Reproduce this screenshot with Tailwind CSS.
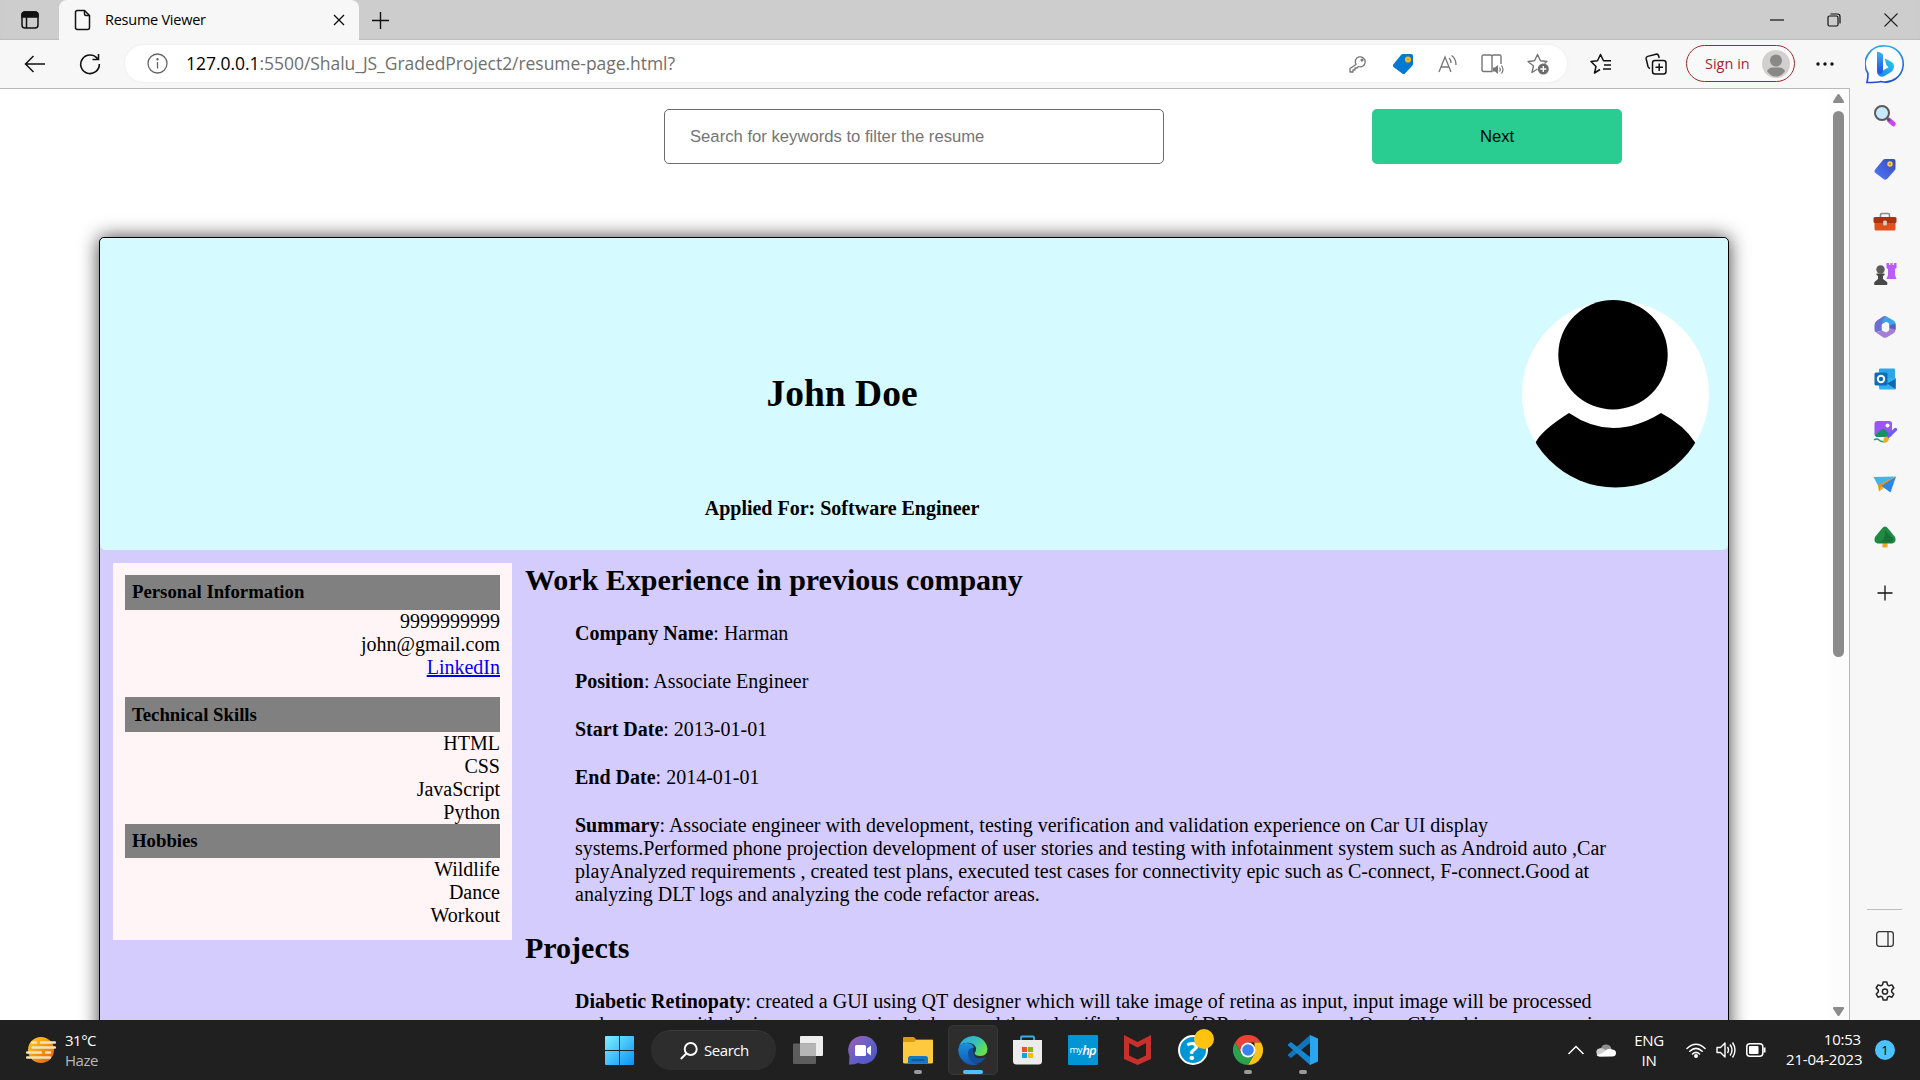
<!DOCTYPE html>
<html lang="en">
<head>
<meta charset="utf-8">
<title>Resume Viewer</title>
<script src="https://cdn.jsdelivr.net/npm/@tailwindcss/browser@4"></script>
</head>
<body class="w-[1920px] h-[1080px] overflow-hidden flex flex-col bg-white text-black font-['Open_Sans',sans-serif]">

<!-- Tab strip -->
<header class="h-10 shrink-0 bg-[#cdcdcd] flex items-center shadow-[inset_0_-1px_1px_#bdbdbd]">
  <div class="w-[59px] flex justify-center">
    <svg class="w-[18px] h-[18px]" viewBox="0 0 18 18" fill="none" stroke="#111" stroke-width="1.5"><rect x="1" y="1" width="16" height="16" rx="3"/><path d="M1 4q0-3 3-3h10q3 0 3 3v2H1z" fill="#111"/><path d="M5.5 6v11"/></svg>
  </div>
  <div class="w-[300px] h-10 bg-[#f7f7f7] rounded-t-lg flex items-center pl-[15px] pr-[14px]">
    <svg class="w-[18px] h-[22px]" viewBox="0 0 18 22" fill="none" stroke="#111" stroke-width="1.5" stroke-linejoin="round"><path d="M3.5 1.5h7l5 5v12q0 2-2 2h-10q-2 0-2-2v-15q0-2 2-2z"/><path d="M10.500 1.500v3.500q0 1.500 1.500 1.500h3.500"/></svg>
    <span class="ml-[13px] text-[14.5px] tracking-[-0.25px] whitespace-nowrap">Resume Viewer</span>
    <svg class="ml-auto w-3 h-3" viewBox="0 0 12 12" stroke="#111" stroke-width="1.4"><path d="M1 1l10 10M11 1L1 11"/></svg>
  </div>
  <svg class="ml-3 w-[19px] h-[19px]" viewBox="0 0 19 19" stroke="#111" stroke-width="1.4"><path d="M9.500 1v17M1 9.500h17"/></svg>
  <div class="ml-auto mr-px flex items-center">
    <div class="w-[57px] flex justify-center"><svg class="w-[14px] h-[14px]" viewBox="0 0 14 14" stroke="#111" stroke-width="1.2"><path d="M0 7h14"/></svg></div>
    <div class="w-[57px] flex justify-center"><svg class="w-[14px] h-[14px]" viewBox="0 0 14 14" fill="none" stroke="#111" stroke-width="1.2"><rect x="1" y="3" width="10" height="10" rx="1.5"/><path d="M3.500 1h7q2.500 0 2.500 2.500v7"/></svg></div>
    <div class="w-[57px] flex justify-center"><svg class="w-[14px] h-[14px]" viewBox="0 0 14 14" stroke="#222" stroke-width="1.1"><path d="M.5.5l13 13M13.500.5l-13 13"/></svg></div>
  </div>
</header>

<!-- Toolbar -->
<nav class="h-12 shrink-0 bg-[#f7f7f7] flex items-center pb-px">
  <div class="w-[69px] flex justify-center"><svg class="w-[22px] h-[18px]" viewBox="0 0 22 18" fill="none" stroke="#111" stroke-width="1.5"><path d="M21 9H1.500M9.500 1l-8 8 8 8"/></svg></div>
  <div class="w-[42px] flex justify-center"><svg class="w-[22px] h-[22px]" viewBox="0 0 22 22" fill="none" stroke="#111" stroke-width="1.6"><path d="M18.500 5.800A9.300 9.300 0 1 0 20.300 11M19.500 1v5.500h-6"/></svg></div>
  <div class="ml-[14px] w-[1442px] h-[37px] rounded-full bg-white flex items-center pl-[22px] shadow-[0_0_3px_#e8e8e8]">
    <svg class="w-[21px] h-[21px]" viewBox="0 0 21 21" fill="none" stroke="#666" stroke-width="1.3"><circle cx="10.500" cy="10.500" r="9.500"/><path d="M10.500 9v6.500"/><circle cx="10.500" cy="6.300" r=".6" fill="#666"/></svg>
    <span class="ml-[18px] text-[17.5px] tracking-[-0.04px] whitespace-nowrap text-[#6f6f6f]"><span class="text-black">127.0.0.1</span>:5500/Shalu_JS_GradedProject2/resume-page.html?</span>
    <div class="ml-auto mr-[7px] flex items-center">
      <div class="w-[45px] flex justify-center"><svg class="w-[18px] h-[18px]" viewBox="0 0 18 18" fill="none" stroke="#767676" stroke-width="1.3" stroke-linejoin="round"><path d="M7 9.500A5 5 0 1 1 9.500 11.500L8 13H6v2H4v2H1v-3.500z"/><circle cx="13" cy="5" r=".9" fill="#767676"/></svg></div>
      <div class="w-[45px] flex justify-center"><svg class="w-[22px] h-[22px]" viewBox="0 0 22 22"><path d="M11 1h8q2 0 2 2v8q0 1-1 2l-7 7.500q-1 1-2.500.2L1.500 14q-1.300-1-.3-2.500L9 2q1-1 2-1z" fill="#0078d4"/><circle cx="16" cy="6.500" r="2.300" fill="#c9b25a" stroke="#ffb900" stroke-width="1.600"/></svg></div>
      <div class="w-[45px] flex justify-center"><svg class="w-[20px] h-[20px]" viewBox="0 0 20 20" fill="none" stroke="#767676" stroke-width="1.300"><path d="M1 18L7 3l6 15M3 13h8M11 4q2 1.500 2 5M13.500 1.500q4.500 3 4.500 9.500"/></svg></div>
      <div class="w-[45px] flex justify-center"><svg class="w-[23px] h-[22px]" viewBox="0 0 23 22" fill="none" stroke="#767676" stroke-width="1.400"><path d="M11 18.500H2.500q-1.500 0-1.500-1.500V3.500Q1 2 2.500 2h7q1.500 0 1.500 1.500zM11 3.500Q11 2 12.500 2h6Q20 2 20 3.500V11"/><path d="M12 14.500h2l3-2.500v9l-3-2.500h-2z" fill="#767676" stroke="none"/><path d="M18.500 14.500q1.500 2 0 4M20.500 12.500q3 4 0 8" stroke-width="1.200"/></svg></div>
      <div class="w-[45px] flex justify-center"><svg class="w-[22px] h-[22px]" viewBox="0 0 22 22" fill="none" stroke="#767676" stroke-width="1.400" stroke-linejoin="round"><path d="M10.500 16l-5.500 3.500 1.500-6.500L1 8.500l6.500-.7L10.500 1.500l3 6.300 6.500.7-2.500 2"/><circle cx="16.300" cy="16" r="5.500" fill="#6d6d6d" stroke="none"/><path d="M16.300 13v6M13.300 16h6" stroke="#fff"/></svg></div>
    </div>
  </div>
  <div class="ml-[6px] w-[55px] flex justify-center"><svg class="w-[22px] h-[22px]" viewBox="0 0 22 22" fill="none" stroke="#111" stroke-width="1.500" stroke-linejoin="round"><path d="M10 16.500L4.500 20 6 13.500 1 8.500l6.500-.7L10.500 1.500l3 6.300h7.500"/><path d="M14 12h7M13 16h8" /></svg></div>
  <div class="w-[55px] flex justify-center"><svg class="w-[22px] h-[22px]" viewBox="0 0 22 22" fill="none" stroke="#111" stroke-width="1.500" stroke-linejoin="round"><rect x="7.500" y="7.500" width="13.500" height="13.500" rx="2.500"/><path d="M14.200 10.500v7.500M10.500 14.200h7.500M5 15.500q-1.500-.5-2-2L1.200 6q-.4-2 1.500-2.600L11 1.200q2-.4 2.500 1.300L14.200 5"/></svg></div>
  <div class="ml-[3px] w-[109px] h-[37px] rounded-full border-[1.500px] border-[#a4262c] bg-[#f9f9f9] flex items-center justify-between pl-[18px] pr-[4px]">
    <span class="text-[14.500px] text-[#a4262c] whitespace-nowrap">Sign in</span>
    <svg class="w-7 h-7" viewBox="0 0 28 28"><circle cx="14" cy="14" r="14" fill="#d2d0ce"/><circle cx="14" cy="10.500" r="6" fill="#8a8886"/><path d="M5 21q2-3.500 5-3.500h8q3 0 5 3.500-3.500 5.500-9 5.500T5 21z" fill="#8a8886"/></svg>
  </div>
  <div class="w-[60px] flex justify-center"><svg class="w-[18px] h-1" viewBox="0 0 18 4" fill="#111"><circle cx="2" cy="2" r="1.700"/><circle cx="9" cy="2" r="1.700"/><circle cx="16" cy="2" r="1.700"/></svg></div>
  <div class="w-[60px] flex justify-center"><svg class="w-10 h-10" viewBox="0 0 40 40"><defs><linearGradient id="bg" x1="0" y1="0" x2="0" y2="1"><stop offset="0" stop-color="#27a8ee"/><stop offset="1" stop-color="#1b4fd0"/></linearGradient><linearGradient id="bb" x1="0" y1="0" x2="0" y2="1"><stop offset="0" stop-color="#3ab4f5"/><stop offset="1" stop-color="#1c4fe0"/></linearGradient><linearGradient id="bc" x1="1" y1="0" x2="0" y2="1"><stop offset="0" stop-color="#22cfe6"/><stop offset="1" stop-color="#1f7df0"/></linearGradient></defs><path d="M20 2a18 18 0 1 1-4 35.500Q12 38.500 2 38.500q1-4 1-9A18 18 0 0 1 20 2z" fill="#fff" stroke="url(#bg)" stroke-width="1.700"/><path d="M20 15.500q-.8-1 .5-.8L26 17.500q3.500 2 3 6-.7 3.500-4 5.200L19.500 32q-3 1.500-5.500-.2-2-1.300-2-4l6-1.300 5.500-3.200-2.200-2.300z" fill="url(#bc)"/><path d="M12 8.500Q12 7 13.500 7.700L17 9.500q1 .7 1 2V26.500q-.5 3-3 3.300-2.500 0-3-3z" fill="url(#bb)"/></svg></div>
</nav>

<div class="h-[932px] shrink-0 flex">
  <!-- Page viewport -->
  <div class="w-[1850px] h-[932px] overflow-hidden border-t border-r border-[#b9b9b9] flex">
    <main class="w-[1829px] font-['Liberation_Serif',serif] text-[20px] leading-[23px]">
      <div class="flex pt-5 pl-[664px] font-['Liberation_Sans',sans-serif] text-[16.670px]">
        <div class="w-[500px] h-[55px] border border-[#6b6b6b] rounded-[5px] flex items-center pl-[25px] text-[#757575]">Search for keywords to filter the resume</div>
        <div class="ml-[208px] w-[250px] h-[55px] rounded-[5px] bg-[#29cc91] flex items-center justify-center">Next</div>
      </div>
      <article class="mt-[73px] ml-[99px] w-[1630px] h-[1100px] border border-black rounded-[5px] bg-[#d5ccfe] shadow-[0_0_19px_rgba(0,0,0,0.75)]">
        <div class="h-[312px] rounded-[5px] bg-[#d5faff] flex">
          <div class="w-[1422px] pl-[62px] pt-[134px] text-center font-bold">
            <h1 class="text-[37.500px] leading-[44px]">John Doe</h1>
            <p class="mt-[81px]">Applied For: Software Engineer</p>
          </div>
          <svg class="mt-[62px] w-[187px] h-[188px]" viewBox="0 0 187 188"><defs><clipPath id="face"><circle cx="93.500" cy="94" r="93.500"/></clipPath></defs><path d="M0 94a93.500 93.500 0 0 1 187 0 93.500 93.500 0 0 1-187 0z" fill="#fff"/><circle cx="91" cy="54.700" r="54.700"/><path clip-path="url(#face)" d="M0 188V170L13.500 142.500Q20 130 47 113 69 128 91.500 128q23 0 47.500-15Q162 125 173.500 143l14 45z"/></svg>
        </div>
        <div class="flex pt-[13px] pl-[13px]">
          <aside class="w-[399px] h-[377px] bg-[#fff5f6] pt-3 px-3 text-right">
            <h2 class="h-[35px] bg-[#808080] pl-[7px] pt-[6px] text-left text-[18.750px] leading-[22px] font-bold">Personal Information</h2>
            <div class="h-[87px]"><p>9999999999</p><p>john@gmail.com</p><p><a class="text-[#0000ee] underline">LinkedIn</a></p></div>
            <h2 class="h-[35px] bg-[#808080] pl-[7px] pt-[7px] text-left text-[18.750px] leading-[22px] font-bold">Technical Skills</h2>
            <div class="h-[92px]"><p>HTML</p><p>CSS</p><p>JavaScript</p><p>Python</p></div>
            <h2 class="h-[34px] bg-[#808080] pl-[7px] pt-[6px] text-left text-[18.750px] leading-[22px] font-bold">Hobbies</h2>
            <div><p>Wildlife</p><p>Dance</p><p>Workout</p></div>
          </aside>
          <section class="ml-[13px] whitespace-nowrap">
            <h2 class="text-[30px] leading-[34px] font-bold">Work Experience in previous company</h2>
            <div class="pl-[50px] pt-[25px] flex flex-col gap-[25px]">
              <p><b>Company Name</b>: Harman</p>
              <p><b>Position</b>: Associate Engineer</p>
              <p><b>Start Date</b>: 2013-01-01</p>
              <p><b>End Date</b>: 2014-01-01</p>
              <p><b>Summary</b>: Associate engineer with development, testing verification and validation experience on Car UI display<br>systems.Performed phone projection development of user stories and testing with infotainment system such as Android auto ,Car<br>playAnalyzed requirements , created test plans, executed test cases for connectivity epic such as C-connect, F-connect.Good at<br>analyzing DLT logs and analyzing the code refactor areas.</p>
            </div>
            <h2 class="mt-[25px] text-[30px] leading-[34px] font-bold">Projects</h2>
            <p class="pl-[50px] pt-[25px]"><b>Diabetic Retinopaty</b>: created a GUI using QT designer which will take image of retina as input, input image will be processed<br>and compare with the images present in database and then classified scores of DR stages we used Open CV and image processing</p>
          </section>
        </div>
      </article>
    </main>
    <!-- Scrollbar -->
    <div class="w-5 bg-[#fcfcfc] flex flex-col items-center pt-[5px] pb-1 pl-0 pr-[1px]">
      <svg class="w-[11px] h-[9px]" viewBox="0 0 11 9" fill="#8b8b8b"><path d="M5.500 0q.6 0 1 .6L11 7.500q.2 1.500-1 1.500H1Q-.2 9 0 7.500L4.500.6q.4-.6 1-.6z"/></svg>
      <div class="mt-2 w-[11px] h-[546px] rounded-full bg-[#8b8b8b]"></div>
      <svg class="mt-auto w-[11px] h-[9px]" viewBox="0 0 11 9" fill="#8b8b8b"><path d="M5.500 9q.6 0 1-.6L11 1.500Q11.200 0 10 0H1Q-.2 0 0 1.500l4.500 6.900q.4.6 1 .6z"/></svg>
    </div>
  </div>

  <!-- Browser sidebar -->
  <aside class="w-[70px] bg-[#f7f7f7] flex flex-col items-center pt-[2px] pr-px">
    <div class="h-[52.500px] flex items-center"><svg class="w-6 h-6" viewBox="0 0 24 24"><path d="M16 16l4.500 4" stroke="#c845f0" stroke-width="4.500" stroke-linecap="round"/><path d="M13 13l4 4" stroke="#555" stroke-width="2"/><circle cx="9" cy="9" r="7" fill="#c8e8fb" stroke="#5a5a5a" stroke-width="2"/></svg></div>
    <div class="h-[52.500px] flex items-center"><svg class="w-6 h-6" viewBox="0 0 24 24"><defs><linearGradient id="tg" x1="1" y1="0" x2="0" y2="1"><stop offset="0" stop-color="#3747b8"/><stop offset="1" stop-color="#4e7bff"/></linearGradient></defs><path d="M12 2h8.500Q22.500 2 22.500 4v7.500q0 1-1 2l-7 8q-2 2-4 .5l-8-6q-2-1.500-.3-3.500L10 3q1-1 2-1z" fill="url(#tg)"/><circle cx="17" cy="7" r="2" fill="#b9a552" stroke="#ffcf3f" stroke-width="1.500"/></svg></div>
    <div class="h-[53px] pt-px flex items-center"><svg class="w-6 h-6" viewBox="0 0 24 24"><path d="M7.500 7V5q0-1.500 1.500-1.500h6q1.500 0 1.500 1.500v2" fill="none" stroke="#8a8a8a" stroke-width="1.600"/><rect x="1.500" y="11" width="21" height="9.500" rx="1.500" fill="#e0521d"/><rect x=".5" y="7" width="23" height="6" rx="1.500" fill="#a8330f"/><rect x="10" y="10.500" width="4" height="5" rx="1.500" fill="#ccc"/></svg></div>
    <div class="h-[52.500px] flex items-center"><svg class="w-6 h-6" viewBox="0 0 24 24"><path d="M13.500 1h2.500v2h1.500V1h2v2H21V1h2.500v5L22 7v6l1.500 4h-10l1.500-4V7l-1.500-1z" fill="#b95cfa"/><circle cx="7.500" cy="7.500" r="4.200" fill="#5c5c5c"/><path d="M3.500 11.500h8v1.500L10 14v3l4 3q1 3-.5 3H2q-1.500 0-.5-3L5 17v-3l-1.500-1z" fill="#484848"/></svg></div>
    <div class="h-[52.500px] flex items-center"><svg class="w-6 h-6" viewBox="0 0 24 24"><path d="M10 1.500l-6 4Q1.500 7 1.500 10v5q0 1.500 1.500 2.300l6-1.800V9l8-4.500-4-3q-1.500-.8-3 0z" fill="#6c6fd2"/><path d="M13 1.200l7.500 4.300q2 1.200 2 3.500v6L16 11V8.500L12.500 6 9 8.500 9.500 5z" fill="#39a5ea"/><path d="M22.500 10v5q0 2-2 3.300L14 22.300q-2 1-4 0l-7-4.800L9 15.500l4 2 3-2v-4z" fill="#a37fd6"/><path d="M16 10.500l6.500-2v6l-6.500-1.500z" fill="#5560c4"/><path d="M12.500 8l3.800 2v4.500l-3.800 2-3.800-2V10z" fill="#f7f7f7"/></svg></div>
    <div class="h-[52.500px] flex items-center"><svg class="w-6 h-6" viewBox="0 0 24 24"><rect x="6" y="1.500" width="16" height="12" rx="1" fill="#2ba7e8"/><path d="M6 11h17v10q0 1.500-1.500 1.500h-14q-1.500 0-1.500-1.500z" fill="#30b2ee"/><path d="M22.500 12v10L14 16.500z" fill="#1066b5"/><rect x="1.500" y="5.500" width="13" height="13" rx="1.500" fill="#0f6cbd"/><circle cx="8" cy="12" r="3.200" fill="none" stroke="#fff" stroke-width="2"/></svg></div>
    <div class="h-[52.500px] flex items-center"><svg class="w-6 h-6" viewBox="0 0 24 24"><rect x="1.500" y="1" width="17.500" height="16" rx="3" fill="#9a55f5"/><path d="M2 15l6-5q2-2 4.500 0l4.500 4.500q-1 2.500-3 2.500H5q-2.500 0-3-2z" fill="#1d8f60"/><circle cx="14.500" cy="5.500" r="2" fill="#fff"/><path d="M22.500 9.500L14.500 17" stroke="#6a5df5" stroke-width="3.300" stroke-linecap="round"/><path d="M10.500 20q0-3.500 3.500-3.500l2 2q-.5 4.500-6.500 4.500z" fill="#f5a623"/><path d="M1 20q3-2 5 0t4 1.500" stroke="#1d9f70" stroke-width="1.500" fill="none"/></svg></div>
    <div class="h-[52.500px] flex items-center"><svg class="w-6 h-6" viewBox="0 0 24 24"><path d="M.5 5L23 4.500 5 13.500z" fill="#3fb4f2"/><path d="M23 4.500L5 13l1 6.500z" fill="#e8910c"/><path d="M23 4.500L8.500 14l9 6.500z" fill="#2b86e8"/><path d="M8.500 14L6 19.500l5-3.500z" fill="#f7b733"/></svg></div>
    <div class="h-[52.500px] flex items-center"><svg class="w-6 h-6" viewBox="0 0 24 24"><path d="M9.500 17h5v5.500h-5z" fill="#f5a623"/><path d="M12 1.500q2 0 3.500 2.500L22 12q2 5-2.500 6.500h-15Q0 17 2 12l6.500-8Q10 1.500 12 1.500z" fill="#218a41"/><path d="M12 5q4 5 8 8.500 0 3-3 4H5q8-1 7-12.500z" fill="#18713a"/></svg></div>
    <div class="h-[60px] flex items-center"><svg class="w-4 h-4" viewBox="0 0 16 16" stroke="#111" stroke-width="1.300"><path d="M8 .5v15M.5 8h15"/></svg></div>
    <div class="mt-auto w-[35px] h-px bg-[#bdbdbd]"></div>
    <div class="h-[58px] flex items-center"><svg class="w-[18px] h-4" viewBox="0 0 18 16" fill="none" stroke="#333" stroke-width="1.300"><rect x=".7" y=".7" width="16.600" height="14.600" rx="2.500"/><path d="M12 1v14"/></svg></div>
    <div class="h-[46px] pt-[2px] mb-[6px] flex items-center"><svg class="w-[22px] h-[22px]" viewBox="0 0 22 22" fill="none" stroke="#222" stroke-width="1.500" stroke-linejoin="round"><path d="M9.200 1h3.600l.7 2.900 1.600.9 2.900-.9 1.800 3.100-2.100 2.100v1.900l2.100 2-1.800 3.200-2.900-.9-1.600.9-.7 2.800H9.200l-.7-2.800-1.600-.9-2.900.9L2.200 13l2.100-2V9.100L2.200 7 4 3.900l2.900.9 1.600-.9z"/><circle cx="11" cy="10.500" r="2.600"/></svg></div>
  </aside>
</div>

<!-- Taskbar -->
<footer class="h-[60px] shrink-0 bg-[#202020] text-white flex items-center text-[15px] leading-5">
  <div class="w-[595px] pl-[26px] flex items-center">
    <svg class="w-[30px] h-[28px]" viewBox="0 0 30 28"><defs><linearGradient id="sun" x1="0" y1="0" x2="1" y2="1"><stop offset="0" stop-color="#ffd21a"/><stop offset="1" stop-color="#e8590c"/></linearGradient></defs><circle cx="15" cy="14" r="13" fill="url(#sun)"/><path d="M6 6.500h4M15 6.500h14M6.500 11.500H29M1 16.500h14M20 16.500h4M1 21.500h23" stroke="#f3e3b8" stroke-width="2.400" stroke-linecap="round"/></svg>
    <div class="ml-[9px] tracking-[-0.5px]"><div>31°C</div><div class="text-[#b8b8b8]">Haze</div></div>
  </div>
  <div class="flex items-center">
    <div class="w-[56px] pl-[10px]"><svg class="w-[29px] h-[29px]" viewBox="0 0 29 29"><defs><linearGradient id="win" x1="0" y1="0" x2="1" y2="1"><stop offset="0" stop-color="#7df0ff"/><stop offset="1" stop-color="#0a93f5"/></linearGradient></defs><path d="M0 1q0-1 1-1h13v14H0zM15 0h13q1 0 1 1v13H15zM0 15h14v14H1q-1 0-1-1zM15 15h14v13q0 1-1 1H15z" fill="url(#win)"/></svg></div>
    <div class="w-[125px] h-10 rounded-full bg-[#2d2d2d] border-t border-[#3a3a3a] flex items-center pl-[29px]">
      <svg class="w-[18px] h-[18px]" viewBox="0 0 18 18" fill="none" stroke="#fff" stroke-width="1.900"><circle cx="10.700" cy="7" r="6"/><path d="M6.300 11.500L.8 17"/></svg>
      <span class="ml-[6px] -mt-px text-[15px] tracking-[-0.450px]">Search</span>
    </div>
    <div class="ml-[4px] w-[55px] h-[50px] flex items-center justify-center"><svg class="w-[30px] h-[28px]" viewBox="0 0 30 28"><rect x="7" y="0" width="23" height="20" rx="1" fill="#ededed"/><rect x="0" y="7.500" width="23" height="20.500" rx="1" fill="#5d5d5d"/><path d="M7 7.500h16V20H7z" fill="#b5b5b5"/></svg></div>
    <div class="w-[55px] h-[50px] flex items-center justify-center"><svg class="w-[29px] h-[29px]" viewBox="0 0 29 29"><defs><linearGradient id="ch" x1="0" y1="0" x2="1" y2="1"><stop offset="0" stop-color="#a45fb0"/><stop offset=".5" stop-color="#6460c8"/><stop offset="1" stop-color="#4a52c4"/></linearGradient></defs><path d="M15 0a14 14 0 1 1-5 27Q6 29 1 28.500L1.500 20A14 14 0 0 1 15 0z" fill="url(#ch)"/><rect x="7" y="9" width="11" height="11" rx="1.500" fill="#fff"/><path d="M19 12.500l4-3v10l-4-3z" fill="#fff"/></svg></div>
    <div class="w-[55px] h-[50px] flex flex-col items-center pt-[11px]"><svg class="w-[30px] h-[28px]" viewBox="0 0 30 28"><path d="M0 2q0-1 1-1h9q1 0 2 1l1 1.500h16q1 0 1 1V10H0z" fill="#d99a0b"/><path d="M0 6h11l2-2h16q1 0 1 1v21q0 1.500-1.500 1.500h-27Q0 27.500 0 26z" fill="#fdc93e"/><path d="M5 27.500v-5q0-2.500 2.500-2.500h15q2.500 0 2.500 2.500v5z" fill="#1278c8"/><path d="M8.500 24h13" stroke="#0c4f8c" stroke-width="1.500"/></svg><i class="mt-[6px] w-2 h-1 rounded-full bg-[#9a9a9a]"></i></div>
    <div class="ml-[3px] mr-[2px] w-[50px] h-[50px] rounded-[5px] bg-[#2d2d2d] border border-[#373737] flex flex-col items-center pt-[9px]"><svg class="w-[30px] h-[30px]" viewBox="0 0 30 30"><defs><linearGradient id="e1" x1="0" y1="0" x2="1" y2=".5"><stop offset="0" stop-color="#2ba3ea"/><stop offset=".6" stop-color="#35c1b8"/><stop offset="1" stop-color="#66e04f"/></linearGradient><linearGradient id="e2" x1="0" y1="0" x2="0" y2="1"><stop offset="0" stop-color="#1a93e0"/><stop offset="1" stop-color="#1257b0"/></linearGradient></defs><path d="M1 12A14.500 14.500 0 0 1 29.500 14q0 6.500-7 7-5.500 0-6-3 2-2 1.500-5-1-4-6-5Q4 7 1 12z" fill="url(#e1)"/><path d="M.3 14Q2 7.500 9 8q6 .5 7 5-5 0-5.500 6 .5 8 9 10.500A15 15 0 0 1 .3 14z" fill="url(#e2)"/><path d="M15.500 12.500Q9.500 13 10 19.500q1 8 9 9.500 6-2 8.500-7-4 2-8 1-6-2-4-10.500z" fill="#124f9c"/></svg><i class="mt-[5px] w-5 h-1 shrink-0 rounded-full bg-[#4cc2ff]"></i></div>
    <div class="w-[54px] h-[50px] flex items-center justify-center"><svg class="w-[29px] h-[30px]" viewBox="0 0 29 30"><path d="M8 6V2.500Q8 1.500 9 1.500h11q1 0 1 1V6" fill="none" stroke="#2fb4ea" stroke-width="1.800"/><path d="M0 5h29v21q0 3.500-3.500 3.500h-22Q0 29.500 0 26z" fill="#ececec"/><path d="M9 12h5v5H9z" fill="#f25022"/><path d="M15 12h5v5h-5z" fill="#7fba00"/><path d="M9 18h5v5H9z" fill="#00a4ef"/><path d="M15 18h5v5h-5z" fill="#ffb900"/></svg></div>
    <div class="w-[56px] h-[50px] pl-px flex items-center justify-center"><div class="w-[30px] h-[30px] rounded-[1px] bg-[#0096d6] flex items-center justify-center text-[9.500px] tracking-[-0.4px] leading-none">my<b class="text-[13px] italic tracking-[-1px] font-semibold">hp</b></div></div>
    <div class="w-[54px] h-[50px] flex items-center justify-center"><svg class="w-[27px] h-[30px]" viewBox="0 0 27 30" fill="#c8302c"><path d="M0 0l13.500 7L27 0v24l-13.500 6L0 24zM5 8v12.500l8.500 4 8.500-4V8l-8.500 4.500z" fill-rule="evenodd"/></svg></div>
    <div class="w-[57px] h-[50px] flex items-center justify-center relative"><div class="w-[30px] h-[30px] rounded-full bg-[#0096d6] border-2 border-white flex items-center justify-center text-[25px] font-bold leading-none">?</div><i class="absolute left-[30px] top-[4px] w-5 h-5 rounded-full bg-[#ffc20e]"></i></div>
    <div class="w-[54px] h-[50px] flex flex-col items-center pt-[10px]"><svg class="w-[30px] h-[30px]" viewBox="0 0 30 30"><path d="M2 7.500A15 15 0 0 1 28 7.500H15L8.500 18.700z" fill="#ea4335"/><path d="M28 7.500A15 15 0 0 1 15 30l6.500-11.200V7.500z" fill="#fbc116"/><path d="M2 7.500A15 15 0 0 0 15 30l6.500-11.200h-13z" fill="#2ba24c"/><circle cx="15" cy="15" r="7.500" fill="#fff"/><circle cx="15" cy="15" r="5.800" fill="#3b82f1"/></svg><i class="mt-[5px] w-2 h-1 rounded-full bg-[#9a9a9a]"></i></div>
    <div class="w-[56px] h-[50px] flex flex-col items-center pt-[10px]"><svg class="w-[30px] h-[30px]" viewBox="0 0 30 30"><path d="M0 19.500L22 0v8L3 23l-3-2.200z" fill="#1173b8"/><path d="M0 10.500L22 30v-8L3 7 0 9.200z" fill="#1585cf"/><path d="M22 0l8 3.500v23L22 30z" fill="#2aa5f0"/></svg><i class="mt-[5px] w-2 h-1 rounded-full bg-[#9a9a9a]"></i></div>
  </div>
  <div class="ml-auto flex items-center pr-[25px]">
    <svg class="w-4 h-[10px]" viewBox="0 0 16 10" fill="none" stroke="#fff" stroke-width="1.500"><path d="M.5 9L8 1.500 15.500 9"/></svg>
    <svg class="ml-3 w-5 h-[14px]" viewBox="0 0 20 14"><path d="M5 5a5.500 5.500 0 0 1 10.500 1L11 10H1Q-1 6 5 5z" fill="#8f8f8f"/><path d="M5 13.500a4 4 0 0 1-1-8q4-1 6 2.500l5 5z" fill="#cfcfcf"/><path d="M4 13.500q-2 0-3.500-1.500Q4 12 8 9q4-5 8-2.500 4 0 4 3.500t-4 3.500z" fill="#fff"/></svg>
    <div class="ml-[18px] w-[30px] text-center tracking-[-0.3px]">ENG<br>IN</div>
    <svg class="ml-[22px] w-5 h-[15px]" viewBox="0 0 20 15" fill="none" stroke="#fff" stroke-width="1.500" stroke-linecap="round"><path d="M1 5.500q9-8.500 18 0M3.800 8.300q6.200-5.800 12.400 0M6.500 11q3.500-3.300 7 0"/><circle cx="10" cy="13" r="1.200" fill="#fff"/></svg>
    <svg class="ml-[10px] w-5 h-[18px]" viewBox="0 0 20 18" fill="none" stroke="#fff" stroke-width="1.400" stroke-linejoin="round"><path d="M1 6.500h3.500L9 2v14l-4.500-4.500H1z"/><path d="M11.500 6q2 3 0 6M14 3.500q4 5.500 0 11M16.500 1.500q5 7.500 0 15"/></svg>
    <svg class="ml-[10px] w-5 h-[14px]" viewBox="0 0 20 14"><rect x=".8" y=".8" width="16" height="12.400" rx="3" fill="none" stroke="#fff" stroke-width="1.500"/><rect x="3" y="3" width="9.500" height="8" rx="1" fill="#fff"/><path d="M17.500 4.500h2v5h-2z" fill="#fff"/></svg>
    <div class="ml-[20px] w-[75px] pb-[2px] text-right tracking-[-0.2px] whitespace-nowrap">10:53<br>21-04-2023</div>
    <div class="ml-[14px] w-5 h-5 rounded-full bg-[#4cc2ff] text-black text-[13px] flex items-center justify-center">1</div>
  </div>
</footer>
</body>
</html>
